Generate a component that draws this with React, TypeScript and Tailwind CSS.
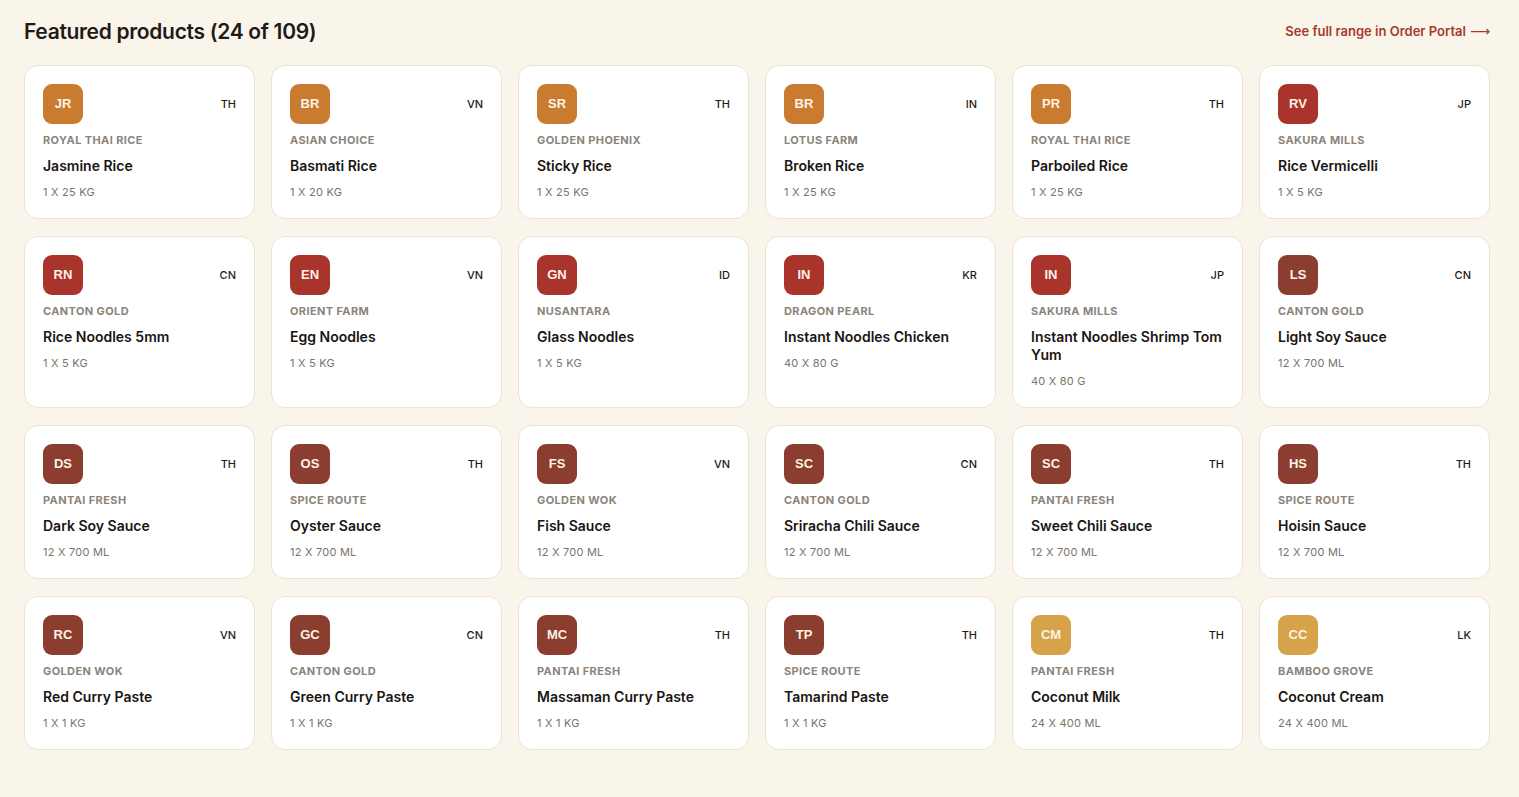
import React from 'react';

type Product = {
  code: string;
  country: string;
  brand: string;
  name: string;
  pack: string;
  tone: 'orange' | 'red' | 'brown' | 'gold';
};

const products: Product[] = [
  { code: 'JR', country: 'TH', brand: 'Royal Thai Rice', name: 'Jasmine Rice', pack: '1 x 25 kg', tone: 'orange' },
  { code: 'BR', country: 'VN', brand: 'Asian Choice', name: 'Basmati Rice', pack: '1 x 20 kg', tone: 'orange' },
  { code: 'SR', country: 'TH', brand: 'Golden Phoenix', name: 'Sticky Rice', pack: '1 x 25 kg', tone: 'orange' },
  { code: 'BR', country: 'IN', brand: 'Lotus Farm', name: 'Broken Rice', pack: '1 x 25 kg', tone: 'orange' },
  { code: 'PR', country: 'TH', brand: 'Royal Thai Rice', name: 'Parboiled Rice', pack: '1 x 25 kg', tone: 'orange' },
  { code: 'RV', country: 'JP', brand: 'Sakura Mills', name: 'Rice Vermicelli', pack: '1 x 5 kg', tone: 'red' },
  { code: 'RN', country: 'CN', brand: 'Canton Gold', name: 'Rice Noodles 5mm', pack: '1 x 5 kg', tone: 'red' },
  { code: 'EN', country: 'VN', brand: 'Orient Farm', name: 'Egg Noodles', pack: '1 x 5 kg', tone: 'red' },
  { code: 'GN', country: 'ID', brand: 'Nusantara', name: 'Glass Noodles', pack: '1 x 5 kg', tone: 'red' },
  { code: 'IN', country: 'KR', brand: 'Dragon Pearl', name: 'Instant Noodles Chicken', pack: '40 x 80 g', tone: 'red' },
  { code: 'IN', country: 'JP', brand: 'Sakura Mills', name: 'Instant Noodles Shrimp Tom Yum', pack: '40 x 80 g', tone: 'red' },
  { code: 'LS', country: 'CN', brand: 'Canton Gold', name: 'Light Soy Sauce', pack: '12 x 700 ml', tone: 'brown' },
  { code: 'DS', country: 'TH', brand: 'Pantai Fresh', name: 'Dark Soy Sauce', pack: '12 x 700 ml', tone: 'brown' },
  { code: 'OS', country: 'TH', brand: 'Spice Route', name: 'Oyster Sauce', pack: '12 x 700 ml', tone: 'brown' },
  { code: 'FS', country: 'VN', brand: 'Golden Wok', name: 'Fish Sauce', pack: '12 x 700 ml', tone: 'brown' },
  { code: 'SC', country: 'CN', brand: 'Canton Gold', name: 'Sriracha Chili Sauce', pack: '12 x 700 ml', tone: 'brown' },
  { code: 'SC', country: 'TH', brand: 'Pantai Fresh', name: 'Sweet Chili Sauce', pack: '12 x 700 ml', tone: 'brown' },
  { code: 'HS', country: 'TH', brand: 'Spice Route', name: 'Hoisin Sauce', pack: '12 x 700 ml', tone: 'brown' },
  { code: 'RC', country: 'VN', brand: 'Golden Wok', name: 'Red Curry Paste', pack: '1 x 1 kg', tone: 'brown' },
  { code: 'GC', country: 'CN', brand: 'Canton Gold', name: 'Green Curry Paste', pack: '1 x 1 kg', tone: 'brown' },
  { code: 'MC', country: 'TH', brand: 'Pantai Fresh', name: 'Massaman Curry Paste', pack: '1 x 1 kg', tone: 'brown' },
  { code: 'TP', country: 'TH', brand: 'Spice Route', name: 'Tamarind Paste', pack: '1 x 1 kg', tone: 'brown' },
  { code: 'CM', country: 'TH', brand: 'Pantai Fresh', name: 'Coconut Milk', pack: '24 x 400 ml', tone: 'gold' },
  { code: 'CC', country: 'LK', brand: 'Bamboo Grove', name: 'Coconut Cream', pack: '24 x 400 ml', tone: 'gold' },
];

const toneClass = {
  orange: 'bg-[#c97b2f]',
  red: 'bg-[#a9342b]',
  brown: 'bg-[#8b3d2f]',
  gold: 'bg-[#d6a34b]',
};

const ProductCard: React.FC<{ p: Product }> = ({ p }) => (
  <div className="bg-white border border-[#ebe3d4] rounded-[14px] px-[18px] pt-[18px] pb-[18px]">
    <div className="flex items-center justify-between">
      <div
        className={`${toneClass[p.tone]} w-10 h-10 rounded-[9px] flex items-center justify-center text-[13px] font-bold text-[#fdf3e6] font-['Liberation_Sans',sans-serif]`}
      >
        {p.code}
      </div>
      <span className="text-[11px] font-medium text-[#1f1a17] font-['Inter',sans-serif] pt-[2px]">{p.country}</span>
    </div>
    <div className="mt-2 text-[11px] leading-4 font-bold uppercase tracking-[0.035em] text-[#8c847b] font-['Inter',sans-serif]">
      {p.brand}
    </div>
    <div className="mt-[9px] text-[14px] leading-[18px] font-semibold text-[#1a1512] font-['Inter',sans-serif]">
      {p.name}
    </div>
    <div className="mt-[9px] text-[11px] leading-4 uppercase tracking-[0.02em] text-[#7c736b] font-['Inter',sans-serif]">
      {p.pack}
    </div>
  </div>
);

export default function App() {
  return (
    <div className="min-h-screen bg-[#f9f5eb] pl-6 pr-[29px] pt-[16px] pb-12">
      <div className="flex items-center justify-between">
        <h2 className="text-[21px] font-semibold text-[#1f1a17] font-['Inter',sans-serif] tracking-[-0.015em]">
          Featured products (24 of 109)
        </h2>
        <a className="text-[13px] font-semibold text-[#a63a2b] font-['Inter',sans-serif] cursor-pointer flex items-center gap-1">
          See full range in Order Portal
          <span className="font-['DejaVu_Sans',sans-serif] font-normal text-[14px]">⟶</span>
        </a>
      </div>
      <div className="mt-[17px] grid grid-cols-6 gap-x-4 gap-y-[17px]">
        {products.map((p, i) => (
          <ProductCard key={i} p={p} />
        ))}
      </div>
    </div>
  );
}
